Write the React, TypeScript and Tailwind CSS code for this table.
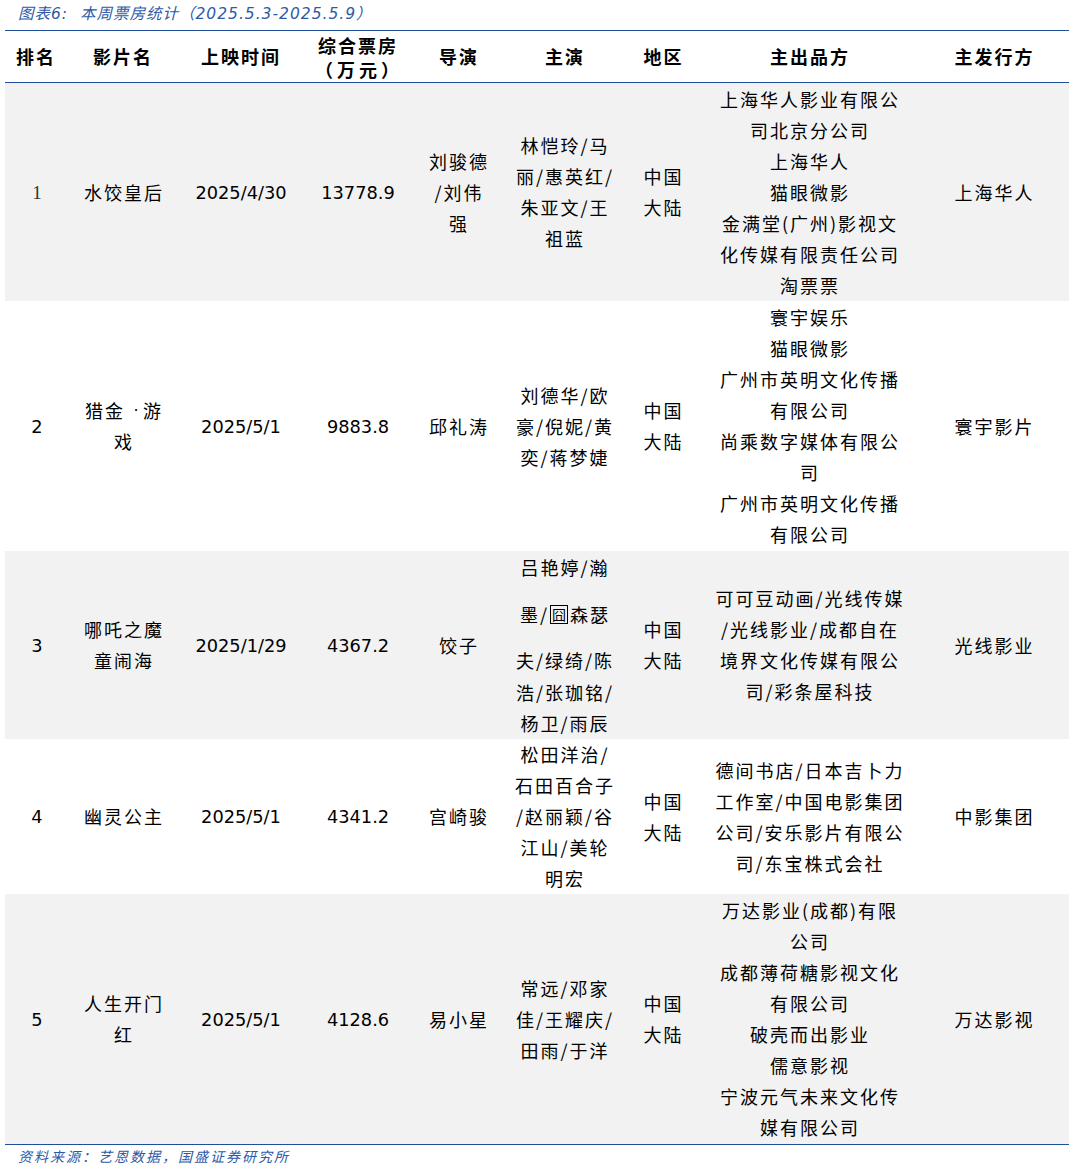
import React from "react";

type Line = React.ReactNode;

interface Row {
  gray: boolean;
  h: string;
  rank: string;
  rankSerif?: boolean;
  film: Line[];
  date: string;
  box: string;
  director: Line[];
  actors: Line[];
  actorHeights?: string[];
  region: Line[];
  producer: Line[];
  dist: Line[];
}

const Box = () => (
  <span className="inline-flex items-center justify-center w-[18px] h-[19px] border-[1.5px] border-black text-[14px] leading-none tracking-normal mr-[2px] ml-[1px]">
    囧
  </span>
);

const rows: Row[] = [
  {
    gray: true,
    h: "h-[218px]",
    rank: "1",
    rankSerif: true,
    film: ["水饺皇后"],
    date: "2025/4/30",
    box: "13778.9",
    director: ["刘骏德", "/刘伟", "强"],
    actors: ["林恺玲/马", "丽/惠英红/", "朱亚文/王", "祖蓝"],
    region: ["中国", "大陆"],
    producer: [
      "上海华人影业有限公",
      "司北京分公司",
      "上海华人",
      "猫眼微影",
      "金满堂(广州)影视文",
      "化传媒有限责任公司",
      "淘票票",
    ],
    dist: ["上海华人"],
  },
  {
    gray: false,
    h: "h-[250px]",
    rank: "2",
    film: [
      <span key="f" className="inline-flex items-center">
        猎金
        <span className="inline-block w-[14px] text-center tracking-normal ml-[4px] font-['DejaVu_Sans',sans-serif] text-[16px]">
          ·
        </span>
        游
      </span>,
      "戏",
    ],
    date: "2025/5/1",
    box: "9883.8",
    director: ["邱礼涛"],
    actors: ["刘德华/欧", "豪/倪妮/黄", "奕/蒋梦婕"],
    region: ["中国", "大陆"],
    producer: [
      "寰宇娱乐",
      "猫眼微影",
      "广州市英明文化传播",
      "有限公司",
      "尚乘数字媒体有限公",
      "司",
      "广州市英明文化传播",
      "有限公司",
    ],
    dist: ["寰宇影片"],
  },
  {
    gray: true,
    h: "h-[188px]",
    rank: "3",
    film: ["哪吒之魔", "童闹海"],
    date: "2025/1/29",
    box: "4367.2",
    director: ["饺子"],
    actors: [
      "吕艳婷/瀚",
      <span key="b" className="inline-flex items-center">
        墨/<Box />森瑟
      </span>,
      "夫/绿绮/陈",
      "浩/张珈铭/",
      "杨卫/雨辰",
    ],
    actorHeights: ["h-[32px]", "h-[61px]", "h-[32px]", "h-[31px]", "h-[31px]"],
    region: ["中国", "大陆"],
    producer: ["可可豆动画/光线传媒", "/光线影业/成都自在", "境界文化传媒有限公", "司/彩条屋科技"],
    dist: ["光线影业"],
  },
  {
    gray: false,
    h: "h-[155px]",
    rank: "4",
    film: ["幽灵公主"],
    date: "2025/5/1",
    box: "4341.2",
    director: ["宫崎骏"],
    actors: ["松田洋治/", "石田百合子", "/赵丽颖/谷", "江山/美轮", "明宏"],
    region: ["中国", "大陆"],
    producer: ["德间书店/日本吉卜力", "工作室/中国电影集团", "公司/安乐影片有限公", "司/东宝株式会社"],
    dist: ["中影集团"],
  },
  {
    gray: true,
    h: "h-[250px]",
    rank: "5",
    film: ["人生开门", "红"],
    date: "2025/5/1",
    box: "4128.6",
    director: ["易小星"],
    actors: ["常远/邓家", "佳/王耀庆/", "田雨/于洋"],
    region: ["中国", "大陆"],
    producer: [
      "万达影业(成都)有限",
      "公司",
      "成都薄荷糖影视文化",
      "有限公司",
      "破壳而出影业",
      "儒意影视",
      "宁波元气未来文化传",
      "媒有限公司",
    ],
    dist: ["万达影视"],
  },
];

const GRID = "grid grid-cols-[56px_120px_120px_114px_88px_124px_73px_220px_149px]";
const CJK = "font-['Noto_Sans_CJK_SC',sans-serif] text-[18px] tracking-[2px]";
const NUM = "font-['DejaVu_Sans','Noto_Sans_CJK_SC',sans-serif] text-[17.8px]";

function Cell({ lines, heights, className = "" }: { lines: Line[]; heights?: string[]; className?: string }) {
  return (
    <div className={`flex flex-col items-center justify-center text-center ${className}`}>
      {lines.map((l, i) => (
        <div
          key={i}
          className={`whitespace-nowrap leading-[31px] flex items-center justify-center ${heights ? heights[i] : "h-[31px]"}`}
        >
          {l}
        </div>
      ))}
    </div>
  );
}

export default function App() {
  return (
    <div className="w-[1075px] h-[1169px] bg-white text-black">
      <div className="h-[30px] pl-[18px] flex items-center italic text-[15.5px] text-[#2d5aa6] font-['DejaVu_Sans','Noto_Sans_CJK_SC',sans-serif]">
        <span className="tracking-[1px]">图表6:&nbsp; 本周票房统计（2025.5.3-2025.5.9）</span>
      </div>
      <div className="ml-[5px] w-[1064px] border-t-[1.5px] border-b-[1.5px] border-[#1f4e9b]">
        <div className={`${GRID} h-[52px] border-b border-[#1f4e9b] font-bold ${CJK}`}>
          <div className="flex items-center justify-center pl-[6px]">排名</div>
          <div className="flex items-center justify-center pl-[4px]">影片名</div>
          <div className="flex items-center justify-center">上映时间</div>
          <div className="flex flex-col items-center justify-center leading-[24px]">
            <div>综合票房</div>
            <div className="tracking-[4px] pl-[2px]">（万元）</div>
          </div>
          <div className="flex items-center justify-center">导演</div>
          <div className="flex items-center justify-center">主演</div>
          <div className="flex items-center justify-center">地区</div>
          <div className="flex items-center justify-center">主出品方</div>
          <div className="flex items-center justify-center">主发行方</div>
        </div>
        {rows.map((r, i) => (
          <div key={i} className={`${GRID} ${r.h} ${r.gray ? "bg-[#f2f2f2]" : "bg-white"}`}>
            <Cell
              lines={[r.rank]}
              className={
                r.rankSerif
                  ? "pl-[8px] font-['Liberation_Serif',serif] text-[19px] text-[#333]"
                  : `pl-[8px] ${NUM}`
              }
            />
            <Cell lines={r.film} className={`pl-[6px] ${CJK}`} />
            <Cell lines={[r.date]} className={NUM} />
            <Cell lines={[r.box]} className={NUM} />
            <Cell lines={r.director} className={CJK} />
            <Cell lines={r.actors} heights={r.actorHeights} className={CJK} />
            <Cell lines={r.region} className={CJK} />
            <Cell lines={r.producer} className={CJK} />
            <Cell lines={r.dist} className={CJK} />
          </div>
        ))}
      </div>
      <div className="h-[22px] pl-[18px] flex items-center italic text-[14px] tracking-[2px] text-[#2d5aa6] font-['Noto_Sans_CJK_SC',sans-serif]">
        资料来源：艺恩数据，国盛证券研究所
      </div>
    </div>
  );
}
